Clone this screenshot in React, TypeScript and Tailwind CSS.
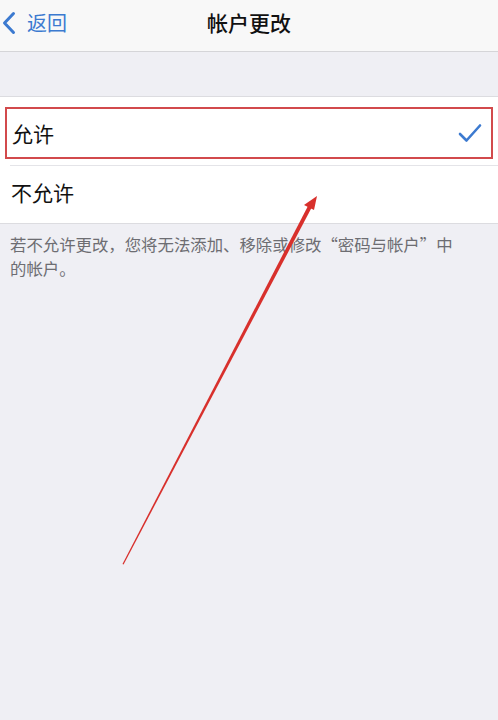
export default function App() {
  const font = { fontFamily: '"Noto Sans CJK SC", "Noto Sans", sans-serif' };

  return (
    <div
      className="relative w-[498px] h-[720px] overflow-hidden bg-[#efeff4]"
      style={font}
    >
      {/* nav bar */}
      <div className="relative h-[52px] bg-[#f8f8f8] border-b border-[#d5d5d8] flex items-center pb-[6px]">
        <div className="flex items-center pl-[2px] text-[#3c7ad0]">
          <svg width="14" height="24" viewBox="0 0 14 24" className="mr-[11px]">
            <path
              d="M11.5 2.5 L2.5 12 L11.5 21.5"
              fill="none"
              stroke="#3c7ad0"
              strokeWidth="3"
              strokeLinecap="round"
              strokeLinejoin="round"
            />
          </svg>
          <span className="text-[20px] leading-none">返回</span>
        </div>
        <div className="absolute inset-x-0 top-0 h-full flex items-center justify-center pb-[6px] pointer-events-none">
          <span className="text-[21px] font-medium text-[#111] leading-none">帐户更改</span>
        </div>
      </div>

      {/* spacer */}
      <div className="h-[44px]" />

      {/* list */}
      <div className="bg-white border-y border-[#dcdce0]">
        <div className="px-[5px] pt-[10px] pb-[6px]">
          <div className="h-[52px] border-2 border-[#d24a4c] flex items-center justify-between pl-[5px] pr-[9px]">
            <span className="text-[21px] text-[#111] leading-none">允许</span>
            <svg width="24" height="20" viewBox="0 0 24 20">
              <path
                d="M2 11 L8.5 17.5 L22 2.5"
                fill="none"
                stroke="#3c7ad0"
                strokeWidth="2.6"
                strokeLinecap="round"
                strokeLinejoin="round"
              />
            </svg>
          </div>
        </div>
        <div className="ml-[10px] border-t border-[#e4e4e8]" />
        <div className="h-[57px] flex items-center pl-[11px] pb-[5px]">
          <span className="text-[21px] text-[#111] leading-none">不允许</span>
        </div>
      </div>

      {/* footer */}
      <p className="pl-[10px] pr-[40px] pt-[8px] text-[16.4px] leading-[24px] text-[#6d6d72]">
        若不允许更改，您将无法添加、移除或修改“密码与帐户”中的帐户。
      </p>

      {/* annotation arrow */}
      <svg
        className="absolute left-0 top-0 pointer-events-none"
        width="498"
        height="720"
        viewBox="0 0 498 720"
      >
        <polygon points="122.5,564 123.6,564.4 312.5,206 309,204" fill="#d8302c" />
        <polygon points="317,196 304,205 314,210" fill="#d8302c" />
      </svg>
    </div>
  );
}
